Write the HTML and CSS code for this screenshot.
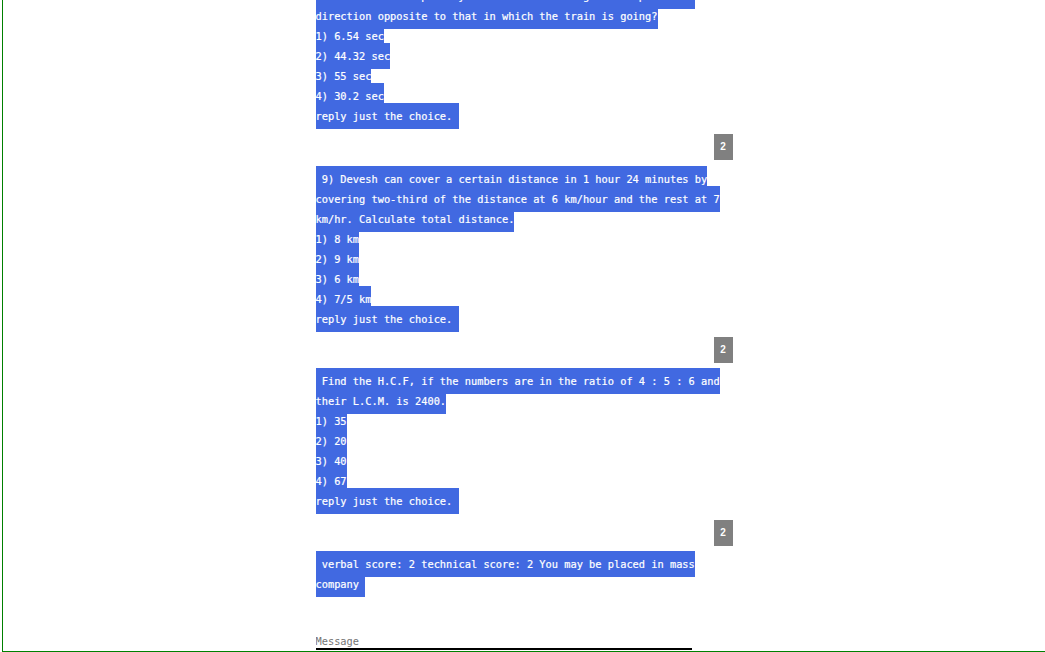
FILE: index.html
```html
<!DOCTYPE html>
<html>
<head>
<meta charset="utf-8">
<title>Quiz chat</title>
<link rel="stylesheet" href="styles.css">
</head>
<body>
<div class="frame">
  <div class="chat">
    <div class="msg"><span class="bubble">&nbsp;8) A train 110 metres long is running with a speed of 60 kmph.<br>How soon will it pass by a tired man running at 6 kmph in the direction opposite to that in which the train is going?<br>1) 6.54 sec<br>2) 44.32 sec<br>3) 55 sec<br>4) 30.2 sec<br>reply just the choice.&nbsp;</span></div>
    <div class="reply"><span class="badge">2</span></div>
    <div class="msg"><span class="bubble">&nbsp;9) Devesh can cover a certain distance in 1 hour 24 minutes by covering two-third of the distance at 6 km/hour and the rest at 7 km/hr. Calculate total distance.<br>1) 8 km<br>2) 9 km<br>3) 6 km<br>4) 7/5 km<br>reply just the choice.&nbsp;</span></div>
    <div class="reply"><span class="badge">2</span></div>
    <div class="msg"><span class="bubble">&nbsp;Find the H.C.F, if the numbers are in the ratio of 4 : 5 : 6 and their L.C.M. is 2400.<br>1) 35<br>2) 20<br>3) 40<br>4) 67<br>reply just the choice.&nbsp;</span></div>
    <div class="reply"><span class="badge">2</span></div>
    <div class="msg"><span class="bubble">&nbsp;verbal score: 2 technical score: 2 You may be placed in mass company&nbsp;</span></div>
    <form class="composer" onsubmit="return false">
      <input class="input" type="text" placeholder="Message">
    </form>
  </div>
</div>
</body>
</html>
```
FILE: styles.css
```css
html, body {
  margin: 0;
  padding: 0;
  overflow: hidden;
  background: #fff;
}

.frame {
  margin-left: 2px;
  height: 651px;
  border-left: 1px solid #008000;
  border-bottom: 1px solid #008000;
  display: flex;
  flex-direction: column;
  justify-content: flex-end;
  overflow: hidden;
}

.chat {
  width: 417px;
  margin: 0 auto;
  flex-shrink: 0;
  font-family: "DejaVu Sans Mono", monospace;
  font-size: 10.33px;
  line-height: 20px;
}

.msg {
  margin: 0;
}

.bubble {
  background: #4169e1;
  color: #fff;
  padding: 7px 0;
  -webkit-text-stroke: 0.2px #fff;
}

.reply {
  display: flex;
  justify-content: flex-end;
  margin: 8.33px 0 8.33px;
}

.badge {
  width: 19px;
  height: 26px;
  background: #808080;
  color: #fff;
  font-family: "Liberation Sans", Arial, sans-serif;
  font-weight: bold;
  font-size: 10px;
  line-height: 26px;
  text-align: center;
}

.composer {
  margin: 38px 0 0;
  padding-bottom: 1px;
}

.input {
  display: block;
  box-sizing: content-box;
  width: 376px;
  height: 14px;
  margin: 0;
  padding: 2px 0 0;
  border: 0;
  border-bottom: 2px solid #000;
  font-family: "DejaVu Sans Mono", monospace;
  font-size: 10.33px;
  line-height: 14px;
  color: #000;
  background: transparent;
  outline: none;
}

.input::placeholder {
  color: #757575;
}
```
